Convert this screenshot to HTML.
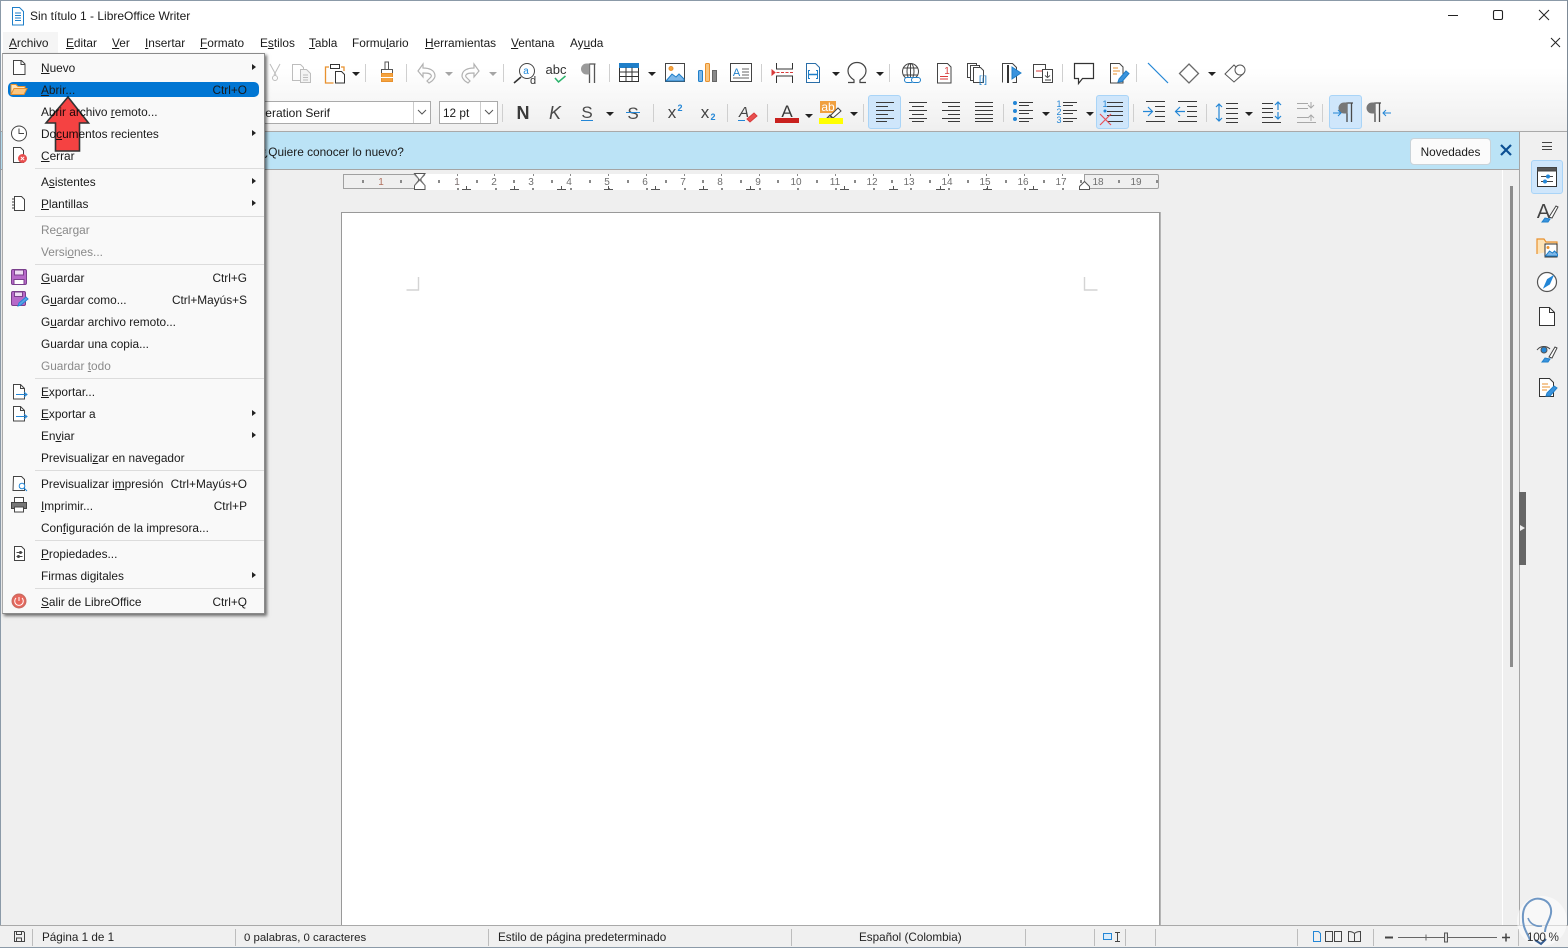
<!DOCTYPE html>
<html lang="es"><head><meta charset="utf-8"><title>Sin título 1 - LibreOffice Writer</title>
<style>
html,body{margin:0;padding:0;width:1568px;height:948px;overflow:hidden;background:#efefef}
body{font-family:"Liberation Sans","DejaVu Sans",sans-serif;font-size:12px;color:#1a1a1a;position:relative}
.a{position:absolute;white-space:nowrap}
.t{position:absolute;white-space:nowrap;line-height:16px;height:16px}
.mb{top:35px;font-size:11.85px}
svg{position:absolute;left:0;top:0;overflow:visible}
#menu{position:absolute;left:2px;top:53px;width:263px;height:561px;background:#f9f9f9;border:1px solid #8a8a8a;border-left-color:#aaa;box-shadow:2px 2px 3px rgba(0,0,0,.55);box-sizing:border-box}
.m{position:absolute;left:38px;white-space:nowrap;line-height:16px;color:#1a1a1a;font-size:11.85px}
.s{position:absolute;right:17px;white-space:nowrap;line-height:16px;color:#1a1a1a;font-size:11.85px;text-align:right}
.d{color:#8a8a8a}
.sep{position:absolute;left:32px;width:229px;height:1px;background:#dcdcdc}
.ar{position:absolute;left:249px;width:0;height:0;border-left:4px solid #222;border-top:3.5px solid transparent;border-bottom:3.5px solid transparent}
.st{position:absolute;top:925px;height:23px;line-height:25px;white-space:nowrap;font-size:11.7px;color:#222}
.sv{position:absolute;top:929px;width:1px;height:17px;background:#bdbdbd}
</style></head><body>

<!-- chrome backgrounds -->
<div class="a" style="left:0;top:0;width:1568px;height:131px;background:linear-gradient(#fff 0,#fff 68px,#f0f0f0 128px,#eee 131px)"></div>
<div class="a" style="left:0;top:131px;width:1568px;height:1px;background:#a9a9a9"></div>
<div class="a" style="left:0;top:132px;width:1519px;height:37px;background:#bbe3f6"></div>
<div class="a" style="left:0;top:169px;width:1519px;height:1px;background:#a5a5a5"></div>
<div class="a" style="left:1519px;top:132px;width:49px;height:793px;background:#f0f0f0;border-left:1px solid #a5a5a5;box-sizing:border-box"></div>
<div class="a" style="left:1502px;top:170px;width:1px;height:755px;background:#fff"></div>
<div class="a" style="left:1510px;top:186px;width:3px;height:481px;background:#8c8c8c"></div>
<div class="a" style="left:1519px;top:492px;width:7px;height:73px;background:#666"></div>
<div class="a" style="left:1520px;top:525px;width:0;height:0;border-left:5px solid #eee;border-top:3.5px solid transparent;border-bottom:3.5px solid transparent"></div>

<!-- window edge -->
<div class="a" style="left:0;top:0;width:1px;height:948px;background:#8b9aa8"></div>
<div class="a" style="left:0;top:0;width:1568px;height:1px;background:#8b9aa8"></div>
<div class="a" style="left:1567px;top:0;width:1px;height:948px;background:#7d8a96"></div>

<!-- page -->
<div class="a" style="left:341px;top:212px;width:819px;height:713px;background:#fff;border:1px solid #999;border-bottom:none;box-sizing:border-box;box-shadow:1px 0 0 #b5b5b5"></div>
<svg width="1568" height="948" style="position:absolute">
<g fill="none" stroke="#d4d4d4" stroke-width="1.4"><path d="M418.5 277v13h-12"/><path d="M1084.5 277v13h13"/></g>
</svg>

<!-- ruler -->
<div class="a" style="left:418px;top:174px;width:666px;height:16px;background:#fff"></div>
<div class="a" style="left:343px;top:174px;width:75px;height:15px;border:1px solid #a0a0a0;border-right:none;background:#efefef;box-sizing:border-box"></div>
<div class="a" style="left:1084px;top:174px;width:75px;height:15px;border:1px solid #a0a0a0;border-radius:0 2px 2px 0;background:#efefef;box-sizing:border-box"></div>
<svg width="1568" height="948" font-family="Liberation Sans" font-size="10" fill="#6f6f6f" text-anchor="middle">
<g id="nums">
<text x="381" y="185" fill="#b0705e">1</text><text x="457" y="185" fill="#7a6f6f">1</text><text x="494" y="185">2</text><text x="531" y="185">3</text><text x="569" y="185">4</text><text x="607" y="185">5</text><text x="645" y="185">6</text><text x="683" y="185">7</text><text x="720" y="185">8</text><text x="758" y="185">9</text><text x="796" y="185">10</text><text x="835" y="185">11</text><text x="872" y="185">12</text><text x="909" y="185">13</text><text x="947" y="185">14</text><text x="985" y="185">15</text><text x="1023" y="185">16</text><text x="1061" y="185">17</text><text x="1098" y="185">18</text><text x="1136" y="185">19</text>
</g>
<g fill="#8a8a8a">
<rect x="362" y="180" width="2" height="3"/><rect x="400" y="180" width="2" height="3"/><rect x="438" y="180" width="2" height="3"/><rect x="476" y="180" width="2" height="3"/><rect x="513" y="180" width="2" height="3"/><rect x="551" y="180" width="2" height="3"/><rect x="589" y="180" width="2" height="3"/><rect x="627" y="180" width="2" height="3"/><rect x="665" y="180" width="2" height="3"/><rect x="702" y="180" width="2" height="3"/><rect x="740" y="180" width="2" height="3"/><rect x="777" y="180" width="2" height="3"/><rect x="816" y="180" width="2" height="3"/><rect x="854" y="180" width="2" height="3"/><rect x="891" y="180" width="2" height="3"/><rect x="929" y="180" width="2" height="3"/><rect x="967" y="180" width="2" height="3"/><rect x="1005" y="180" width="2" height="3"/><rect x="1043" y="180" width="2" height="3"/><rect x="1080" y="180" width="2" height="3"/><rect x="1118" y="180" width="2" height="3"/><rect x="1156" y="180" width="2" height="3"/>
<rect x="457" y="174" width="1" height="2"/><rect x="494" y="174" width="1" height="2"/><rect x="533" y="174" width="1" height="2"/><rect x="570" y="174" width="1" height="2"/><rect x="608" y="174" width="1" height="2"/><rect x="646" y="174" width="1" height="2"/><rect x="684" y="174" width="1" height="2"/><rect x="721" y="174" width="1" height="2"/><rect x="759" y="174" width="1" height="2"/><rect x="797" y="174" width="1" height="2"/><rect x="835" y="174" width="1" height="2"/><rect x="873" y="174" width="1" height="2"/><rect x="910" y="174" width="1" height="2"/><rect x="948" y="174" width="1" height="2"/><rect x="986" y="174" width="1" height="2"/><rect x="1024" y="174" width="1" height="2"/><rect x="1062" y="174" width="1" height="2"/>
<rect x="457" y="188" width="2" height="2"/><rect x="495" y="188" width="2" height="2"/><rect x="532" y="188" width="2" height="2"/><rect x="570" y="188" width="2" height="2"/><rect x="608" y="188" width="2" height="2"/><rect x="646" y="188" width="2" height="2"/><rect x="684" y="188" width="2" height="2"/><rect x="721" y="188" width="2" height="2"/><rect x="759" y="188" width="2" height="2"/><rect x="797" y="188" width="2" height="2"/><rect x="835" y="188" width="2" height="2"/><rect x="873" y="188" width="2" height="2"/><rect x="910" y="188" width="2" height="2"/><rect x="948" y="188" width="2" height="2"/><rect x="986" y="188" width="2" height="2"/><rect x="1024" y="188" width="2" height="2"/><rect x="1062" y="188" width="2" height="2"/>
</g>
<g fill="none" stroke="#555" stroke-width="1">
<path d="M466.500 186v4M462 189.500h9M514.500 186v4M510 189.500h9M561.500 186v4M557 189.500h9M608.500 186v4M604 189.500h9M655.500 186v4M651 189.500h9M703.500 186v4M699 189.500h9M750.500 186v4M746 189.500h9M844.500 186v4M840 189.500h9M893.500 186v4M889 189.500h9M940.500 186v4M936 189.500h9M987.500 186v4M983 189.500h9M1033.500 186v4M1029 189.500h9"/>
<path d="M414.500 173.500h10.500l-4 5v2l4 5v4h-10.500v-4l4-5v-2l-4-5z" fill="#fff"/>
<path d="M414.500 174.500l10.500 11M425 174.500l-10.500 11" stroke="#777"/>
<path d="M1079.500 189.500v-3l5-5 5 5v3z" fill="#fff"/>
</g>
</svg>

<!-- title and menu bar -->
<div class="t" style="left:30px;top:8px">Sin título 1 - LibreOffice Writer</div>
<div class="a" style="left:3px;top:32px;width:55px;height:21px;background:#f5f5f5"></div>
<div class="t mb" style="left:9px"><u>A</u>rchivo</div>
<div class="t mb" style="left:66px"><u>E</u>ditar</div>
<div class="t mb" style="left:112px"><u>V</u>er</div>
<div class="t mb" style="left:145px"><u>I</u>nsertar</div>
<div class="t mb" style="left:200px"><u>F</u>ormato</div>
<div class="t mb" style="left:260px">E<u>s</u>tilos</div>
<div class="t mb" style="left:309px"><u>T</u>abla</div>
<div class="t mb" style="left:352px">Formu<u>l</u>ario</div>
<div class="t mb" style="left:425px"><u>H</u>erramientas</div>
<div class="t mb" style="left:511px"><u>V</u>entana</div>
<div class="t mb" style="left:570px">Ay<u>u</u>da</div>

<!-- combos -->
<div class="a" style="left:240px;top:101px;width:191px;height:23px;background:#fff;border:1px solid #aaa;box-sizing:border-box"></div>
<div class="a" style="left:413px;top:102px;width:1px;height:21px;background:#ccc"></div>
<div class="a" style="left:439px;top:101px;width:59px;height:23px;background:#fff;border:1px solid #aaa;box-sizing:border-box"></div>
<div class="a" style="left:480px;top:102px;width:1px;height:21px;background:#ccc"></div>
<div class="t" style="left:230px;top:105px;width:100px;text-align:right;font-size:12px">Liberation Serif</div>
<div class="t" style="left:443px;top:105px;font-size:11.8px">12 pt</div>

<!-- highlighted toolbar buttons -->
<div class="a" style="left:868px;top:95px;width:33px;height:34px;background:#cfe6fb;border:1px solid #a9d4f7;border-radius:3px;box-sizing:border-box"></div>
<div class="a" style="left:1096px;top:95px;width:33px;height:34px;background:#cfe6fb;border:1px solid #a9d4f7;border-radius:3px;box-sizing:border-box"></div>
<div class="a" style="left:1329px;top:95px;width:33px;height:34px;background:#cfe6fb;border:1px solid #a9d4f7;border-radius:3px;box-sizing:border-box"></div>
<div class="a" style="left:1531px;top:160px;width:32px;height:34px;background:#cfe6fb;border:1px solid #a9d4f7;border-radius:3px;box-sizing:border-box"></div>

<!-- info bar -->
<div class="t" style="left:261px;top:144px;font-size:11.85px">¿Quiere conocer lo nuevo?</div>
<div class="a" style="left:1410px;top:138px;width:81px;height:27px;background:#fbfbfb;border:1px solid #c9d3d9;border-radius:4px;box-sizing:border-box;text-align:center;line-height:27px;font-size:11.8px">Novedades</div>

<!-- icons -->
<svg width="1568" height="948" fill="none" stroke="#333" stroke-width="1">
<!-- title icon -->
<path d="M12.500 8.500h7l4 4v13.500h-11z" stroke="#1f7fc9" fill="#fff" transform="translate(0,-1)"/>
<path d="M15 13h6M15 15.500h6M15 18h6M15 20.500h6" stroke="#1f7fc9"/>
<!-- window controls -->
<path d="M1448 15.500h10M1539 10l10 10M1549 10l-10 10M1551 38l9 9M1560 38l-9 9" stroke="#222"/>
<rect x="1493.500" y="10.500" width="9" height="9" rx="1.500" stroke="#222" stroke-width="1.100"/>
<!-- infobar close -->
<path d="M1501 145l10 10M1511 145l-10 10" stroke="#0b4f93" stroke-width="2.200"/>
<!-- combo chevrons -->
<path d="M418 110l4 4 4-4M485 110l4 4 4-4" stroke="#555"/>

<!-- separators -->
<g stroke="#cfcfcf"><path d="M365.500 64v18M406.500 64v18M503.500 64v18M609.500 64v18M761.500 64v18M889.500 64v18M1062.500 64v18M1136.500 64v18M502.500 104v18M653.500 104v18M727.500 104v18M767.500 104v18M863.500 104v18M1003.500 104v18M1133.500 104v18M1206.500 104v18M1322.500 104v18"/></g>

<!-- dropdown arrows -->
<g fill="#222" stroke="none">
<path d="M352 72h8l-4 4zM648 72h8l-4 4zM832 72h8l-4 4zM876 72h8l-4 4zM1208 72h8l-4 4zM606 112h8l-4 4zM805 114h8l-4 4zM850 112h8l-4 4zM1042 112h8l-4 4zM1086 112h8l-4 4zM1245 112h8l-4 4z"/>
<path d="M445 72h8l-4 4zM489 72h8l-4 4z" fill="#a5a5a5"/>
</g>

<!-- row 1 -->
<g stroke="#bdbdbd"><path d="M270 64l6 11M280 64l-6 11"/><circle cx="275" cy="78" r="2.500"/></g>
<g stroke="#bdbdbd"><path d="M292.500 64.500h8l3 3v13h-11z"/><path d="M300.500 69.500h6l4 4v9h-10z" fill="#f4f4f4"/><path d="M303 75h5M303 77.500h5M303 80h5"/></g>
<g><path d="M329 67h-3.500v16h8" stroke="#e8912e" stroke-width="1.300"/><path d="M341 67h3v4" stroke="#e8912e" stroke-width="1.300"/><rect x="330.500" y="64.500" width="9" height="4" fill="#fff"/><path d="M335.500 71.500h6l3 3v8.500h-9z" fill="#fff"/></g>
<g><path d="M385 62h3.500v8h-3.500z" stroke="#555"/><rect x="381.500" y="69.500" width="11" height="4" fill="#fff" stroke="#555"/><path d="M381.500 73.500h11v8h-11z" fill="#f5a33f" stroke="#e8912e"/><path d="M381 77.500h12" stroke="#fff"/></g>
<g stroke="#b2b2b2" stroke-width="1.200"><path d="M418 72l5-7v4c6 0 12 2 12 8 0 2-2 4-3 5l-3 2-2-2 3-3c1-1 2-2 1-3-1-2-5-2-8-2v4z" transform="translate(0,-1)"/><path d="M479 72l-5-7v4c-6 0-12 2-12 8 0 2 2 4 3 5l3 2 2-2-3-3c-1-1-2-2-1-3 1-2 5-2 8-2v4z" transform="translate(0,-1)"/></g>
<g><circle cx="527" cy="71" r="7.500" fill="#fff" stroke="#444"/><path d="M521 77l-7 6" stroke="#333" stroke-width="1.600"/></g>
<text x="526" y="74" font-family="Liberation Sans" font-size="10" fill="#1e88d9" stroke="none" text-anchor="middle">a</text>
<text x="533" y="84" font-family="Liberation Sans" font-size="11" fill="#333" stroke="none" text-anchor="middle">d</text>
<text x="556" y="74" font-family="Liberation Sans" font-size="13" fill="#333" stroke="none" text-anchor="middle">abc</text>
<path d="M555 78l3.500 4 7-6" stroke="#2bb36b" stroke-width="1.500"/>
<path d="M589 64h6.500M589.500 64v19M594.500 64v19" stroke="#555" stroke-width="1.300"/><path d="M589 64h-2.500a4.500 4.500 0 0 0 0 10h2.500z" fill="#9a9a9a" stroke="#9a9a9a"/>
<g><rect x="619.500" y="63.500" width="19" height="18" fill="#fff"/><rect x="619.500" y="63.500" width="19" height="4" fill="#1f7fc9" stroke="#1f7fc9"/><path d="M619.500 72h19M619.500 76.500h19M626 67.500v14M632 67.500v14"/></g>
<g><rect x="665.500" y="63.500" width="19" height="18" fill="#fff" stroke="#444"/><circle cx="671" cy="68.500" r="2" fill="#f5a33f" stroke="#e8912e"/><path d="M666 81l6-7 4 3 3-3 5 5v2z" fill="#7db7e8" stroke="#1f7fc9"/></g>
<g><rect x="698.500" y="70.500" width="4" height="11" rx="1" fill="#7db7e8" stroke="#1f7fc9"/><rect x="705.500" y="63.500" width="4" height="18" rx="1" fill="#fbc67f" stroke="#e8912e"/><rect x="712.500" y="70.500" width="4" height="11" fill="#888" stroke="#666"/></g>
<g><rect x="730.500" y="63.500" width="21" height="18" fill="#fff" stroke="#444"/><path d="M742 69h7M742 72h7M742 75h7M733 78h16" stroke="#666"/></g>
<text x="736.500" y="76" font-family="Liberation Sans" font-size="11" fill="#1f7fc9" stroke="none" text-anchor="middle">A</text>
<g><path d="M776.500 63v6h16v-6M776.500 83v-7h16v7" stroke="#333"/><path d="M772 72.500h21" stroke="#d83b3b" stroke-dasharray="3 1.500"/><path d="M772 70l3 2.500-3 2.500z" fill="#d83b3b" stroke="#d83b3b"/></g>
<g><path d="M806.500 63.500h9l4 4v15h-13z" fill="#fff" stroke="#2a6ea8"/><path d="M810 70.500h-1.500v8h1.500M816 70.500h1.500v8h-1.500" stroke="#1f7fc9"/><path d="M809 74.500h8" stroke="#1f7fc9" stroke-width="1.500"/></g>
<path d="M848 82.500h6v-2.500c-3-2-6-5-6-9 0-5 4-8.500 9-8.500s9 3.500 9 8.500c0 4-3 7-6 9v2.500h6" stroke="#444" stroke-width="1.200"/>
<g stroke="#444"><circle cx="910.500" cy="71.500" r="8"/><ellipse cx="910.500" cy="71.500" rx="3.500" ry="8"/><path d="M903 68h15M903 75h15M910.500 63v17"/></g>
<g stroke="#1f7fc9" fill="#fff"><rect x="904.500" y="77.500" width="9" height="5" rx="2.500"/><rect x="911.500" y="77.500" width="9" height="5" rx="2.500"/></g>
<g><path d="M937.500 63.500h10l3.500 3.500v16h-13.500z" fill="#fff" stroke="#444"/><path d="M940 76.500h8M940 79h8" stroke="#d83b3b"/></g>
<text x="947" y="74" font-family="Liberation Sans" font-size="10" fill="#d83b3b" stroke="none" text-anchor="middle">1</text>
<g fill="#fff" stroke="#444"><rect x="967.500" y="63.500" width="9" height="14"/><rect x="970.500" y="65.500" width="9" height="15"/><path d="M973.500 67.500h7l3 3v12h-10z"/></g>
<text x="983" y="83" font-family="Liberation Sans" font-size="10.500" fill="#1f7fc9" stroke="none" text-anchor="middle">[i]</text>
<g><path d="M1002.500 82.500v-19h10l4 4v15h-4" stroke="#444"/><path d="M1008 65v18" stroke="#333" stroke-width="2"/><path d="M1012 67l9 6-9 6z" fill="#3a93dd" stroke="#1f7fc9"/></g>
<g><path d="M1033.500 64.500h12v13h-12z" fill="#fff" stroke="#444"/><path d="M1036 71h7" stroke="#d83b3b"/><path d="M1042.500 69.500h10v13h-10z" fill="#fff" stroke="#444"/><path d="M1047.500 71.500v5m-2.500-1l2.500 2 2.500-2M1045 80h6" stroke="#444"/></g>
<path d="M1074.500 63.500h19v15h-11l-4 5v-5h-4z" fill="#fff" stroke="#333" stroke-width="1.200"/>
<g><path d="M1110.500 63.500h9l3.500 3.500v16h-12.500z" fill="#fff" stroke="#444"/><path d="M1113 68h5M1113 71h7M1113 74h4" stroke="#e8912e"/><path d="M1118 82l1-3 7-8 3 2.500-7 8z" fill="#3a93dd" stroke="#1f7fc9"/></g>
<path d="M1148 63l20 20" stroke="#2386d6" stroke-width="1.200"/>
<path d="M1189 64l9.500 9.500-9.500 9.500-9.500-9.500z" stroke="#6a6a6a" stroke-width="1.300" fill="#fff"/>
<g><path d="M1234 66l9 9-9 8-9-8z" transform="translate(0,-1)" stroke="#555" fill="#fff"/><circle cx="1240" cy="70" r="5" fill="#fff" stroke="#555"/></g>

<!-- row 2 -->
<text x="523" y="119" font-family="Liberation Sans" font-size="18" font-weight="700" fill="#3a3a3a" stroke="none" text-anchor="middle">N</text>
<text x="555" y="119" font-family="Liberation Sans" font-size="18" font-style="italic" fill="#4a4a4a" stroke="none" text-anchor="middle">K</text>
<text x="587" y="118" font-family="Liberation Sans" font-size="17" fill="#4a4a4a" stroke="none" text-anchor="middle">S</text>
<path d="M581 120.500h12" stroke="#2386d6"/>
<text x="633" y="119" font-family="Liberation Sans" font-size="17" fill="#4a4a4a" stroke="none" text-anchor="middle">S</text>
<path d="M626 112.500h14" stroke="#2386d6"/>
<text x="672" y="118" font-family="Liberation Sans" font-size="17" fill="#444" stroke="none" text-anchor="middle">x</text>
<text x="680" y="111" font-family="Liberation Sans" font-size="9" font-weight="700" fill="#2386d6" stroke="none" text-anchor="middle">2</text>
<text x="705" y="118" font-family="Liberation Sans" font-size="17" fill="#444" stroke="none" text-anchor="middle">x</text>
<text x="713" y="120" font-family="Liberation Sans" font-size="9" font-weight="700" fill="#2386d6" stroke="none" text-anchor="middle">2</text>
<text x="744" y="117" font-family="Liberation Sans" font-size="15" font-style="italic" fill="#444" stroke="none" text-anchor="middle">A</text>
<path d="M738 120.500h7" stroke="#2386d6"/><path d="M747 119l7-6 3 3-7 6z" fill="#e84f4f" stroke="#d83b3b"/>
<text x="787" y="117" font-family="Liberation Sans" font-size="17" fill="#3a3a3a" stroke="none" text-anchor="middle">A</text>
<rect x="775" y="118" width="24" height="5" fill="#c9211e" stroke="none"/>
<rect x="820" y="101" width="16" height="12" fill="#f0a040" stroke="none"/>
<text x="828" y="111" font-family="Liberation Sans" font-size="12" fill="#fff" stroke="none" text-anchor="middle">ab</text>
<path d="M830 116l8-8 3 3-8 7zM827 118l3-3 3 3z" fill="#fff" stroke="#444"/>
<rect x="819" y="118" width="24" height="6" fill="#ff0" stroke="none"/>

<g stroke="#3a3a3a">
<path d="M876 102.500h18M876 106.500h12M876 110.500h18M876 114.500h12M876 118.500h18M876 121.500h11" stroke-width="0.900"/>
<path d="M909 102.500h18M912 106.500h12M909 110.500h18M912 114.500h12M909 118.500h18M912 121.500h12" stroke-width="0.900"/>
<path d="M942 102.500h18M948 106.500h12M942 110.500h18M948 114.500h12M942 118.500h18M948 121.500h12" stroke-width="0.900"/>
<path d="M975 102.500h18M975 106.500h18M975 110.500h18M975 114.500h18M975 118.500h18M975 121.500h18" stroke-width="0.900"/>
<path d="M1019 102.500h14M1019 105.500h10M1019 110.500h14M1019 113.500h10M1019 118.500h14M1019 121.500h10" stroke-width="1"/>
<path d="M1063 102.500h14M1063 105.500h10M1063 110.500h14M1063 113.500h10M1063 118.500h14M1063 121.500h10" stroke-width="1"/>
<path d="M1107 102.500h16M1107 106.500h16M1107 111.500h16M1107 115.500h16M1107 121.500h16" stroke-width="1"/>
<path d="M1146 101.500h19M1155 106.500h10M1155 111.500h10M1155 116.500h10M1146 121.500h19" stroke-width="1"/>
<path d="M1178 101.500h19M1187 106.500h10M1187 111.500h10M1187 116.500h10M1178 121.500h19" stroke-width="1"/>
<path d="M1226 103.500h12M1226 108.500h12M1226 113.500h12M1226 118.500h12M1226 122.500h12" stroke-width="1"/>
<path d="M1262 103.500h11M1262 108.500h11M1262 112.500h11M1262 117.500h11M1262 122.500h19" stroke-width="1"/>
</g>
<g fill="#2386d6" stroke="none"><circle cx="1015" cy="103" r="2"/><circle cx="1015" cy="111" r="2"/><circle cx="1015" cy="119" r="2"/><circle cx="1105" cy="111" r="1.500"/></g>
<g font-family="Liberation Sans" font-size="9" fill="#2386d6" stroke="none" text-anchor="middle"><text x="1059" y="107">1</text><text x="1059" y="115">2</text><text x="1059" y="123">3</text><text x="1105" y="107">1</text></g>
<path d="M1100 114l11 11M1111 114l-11 11" stroke="#e9505a" stroke-width="1.200"/>
<path d="M1143 111.500h9M1148 107l4.500 4.500-4.500 4.500" stroke="#2386d6" stroke-width="1.200"/>
<path d="M1185 111.500h-9M1180 107l-4.500 4.500 4.500 4.500" stroke="#2386d6" stroke-width="1.200"/>
<path d="M1219 104v17M1216 107l3-3 3 3M1216 118l3 3 3-3" stroke="#2386d6" stroke-width="1.200"/>
<path d="M1278 102v8M1275 105l3-3 3 3M1278 119v-7M1275 116l3 3 3-3" stroke="#2386d6" stroke-width="1.200"/>
<g stroke="#a8a8a8"><path d="M1297 103.500h11M1297 108.500h11M1297 117.500h11M1297 122.500h19M1311 102v6M1308 105l3 3 3-3M1311 121v-6M1308 118l3-3 3 3"/></g>
<path d="M1346 103h7M1347 103v19M1351.500 103v19" stroke="#4a4a4a" stroke-width="1.300"/><path d="M1347 103h-3a4.500 4.500 0 0 0 0 10h3z" fill="#777" stroke="#777"/><path d="M1333 113h8M1338 110l3 3-3 3" stroke="#2386d6"/>
<path d="M1374 103h7M1375 103v19M1379.500 103v19" stroke="#4a4a4a" stroke-width="1.300"/><path d="M1375 103h-3a4.500 4.500 0 0 0 0 10h3z" fill="#777" stroke="#777"/><path d="M1391 113h-8M1386 110l-3 3 3 3" stroke="#2386d6"/>

<!-- sidebar -->
<path d="M1542 142.500h10M1542 146.500h10M1542 149.500h10" stroke="#444"/>
<rect x="1537.500" y="167.500" width="19" height="19" fill="#fff" stroke="#333"/><rect x="1537.500" y="167.500" width="19" height="3.500" fill="#555" stroke="#444"/>
<path d="M1541 176.500h12M1541 181.500h12" stroke="#444"/><circle cx="1548" cy="176.500" r="1.500" fill="#2386d6" stroke="#2386d6"/><circle cx="1545" cy="181.500" r="1.500" fill="#2386d6" stroke="#2386d6"/>
<text x="1543.500" y="218" font-family="Liberation Sans" font-size="20" fill="#444" stroke="none" text-anchor="middle">A</text>
<path d="M1549 217l7-11 2 1-6 11z" fill="#fff" stroke="#444"/><path d="M1542 222l3-4 5 1-2 3z" fill="#3a93dd" stroke="#1f7fc9"/>
<path d="M1537 254v-15h7l2 3h11v8" fill="#fde3b8" stroke="#e8912e" stroke-width="1.200"/><rect x="1545" y="244" width="12" height="13" fill="#fff" stroke="#333"/><path d="M1545.500 256l4-5 3 2 2-2 3 3v2z" fill="#7db7e8" stroke="#1f7fc9"/><circle cx="1548" cy="247.500" r="1" fill="#e8912e" stroke="#e8912e"/>
<circle cx="1547" cy="282" r="9.500" fill="#fff" stroke="#555" stroke-width="1.200"/><path d="M1553 276l-3.500 8-5.500 3.500 3.500-8z" fill="#2386d6" stroke="#2386d6"/>
<path d="M1539.500 307.500h10l5 5v13h-15z" fill="#fff" stroke="#333"/><path d="M1549.500 307.500v5h5" stroke="#333"/>
<path d="M1537 350c3-4 9-5 13-1" stroke="#444"/><circle cx="1544" cy="350" r="3" fill="#2386d6" stroke="#555"/><path d="M1549 357l6-10 2 1-5 10z" fill="#fff" stroke="#444"/><path d="M1542 362l3-4 5 1-2 3z" fill="#3a93dd" stroke="#1f7fc9"/>
<path d="M1539.500 378.500h10l4 4v14h-14z" fill="#fff" stroke="#333"/><path d="M1542 384h6M1542 387h8M1542 390h5" stroke="#e8912e"/><path d="M1546 396l1-3 7-7 3 2-7 8z" fill="#3a93dd" stroke="#1f7fc9"/>
</svg>

<!-- status bar -->
<div class="a" style="left:0;top:925px;width:1568px;height:23px;background:#f0f0f0;border-top:1px solid #a9a9a9;box-sizing:border-box"></div>
<div class="a" style="left:0;top:947px;width:1568px;height:1px;background:#8b9aa8"></div>
<div class="sv" style="left:32px"></div><div class="sv" style="left:235px"></div><div class="sv" style="left:488px"></div><div class="sv" style="left:791px"></div><div class="sv" style="left:1025px"></div><div class="sv" style="left:1094px"></div><div class="sv" style="left:1125px"></div><div class="sv" style="left:1155px"></div><div class="sv" style="left:1297px"></div><div class="sv" style="left:1373px"></div><div class="sv" style="left:1518px"></div>
<div class="st" style="left:42px">Página 1 de 1</div>
<div class="st" style="left:244px;font-size:11.4px;line-height:27px">0 palabras, 0 caracteres</div>
<div class="st" style="left:498px">Estilo de página predeterminado</div>
<div class="st" style="left:859px">Español (Colombia)</div>
<svg width="1568" height="948" fill="none" stroke="#444">
<path d="M14.500 931.500h9l1 1v9h-10z"/><path d="M16.500 931.500v3h5v-3M16.500 941v-3h5v3" />
<rect x="1103.500" y="933.500" width="8" height="6" stroke="#2386d6" fill="#d9ecfb"/><path d="M1115 932.500h5M1117.500 932.500v9M1115 941.500h5"/>
<path d="M1313.500 931.500h5l2 2v8h-7z" stroke="#2386d6"/>
<path d="M1325.500 931.500h7v10h-7zM1334.500 931.500h7v10h-7z"/>
<path d="M1348.500 931.500c3 0 5 1 6 2 1-1 3-2 6-2v10h-12zM1354.500 933v8.500"/>
<path d="M1385 937.500h8" stroke-width="2"/><path d="M1398 937.500h99" stroke="#666"/><path d="M1426 934.500v6" stroke="#666"/><rect x="1444.500" y="933" width="3" height="9" fill="#ddd" stroke="#555"/><path d="M1502 937.500h8M1506 933.500v8" stroke-width="1.500"/>
</svg>

<!-- watermark -->
<svg width="1568" height="948" fill="none">
<circle cx="1542" cy="921" r="25" fill="#fff" fill-opacity=".55"/>
<path d="M1530 940c-3-8-8-12-7-26 1-11 10-17 18-15 9 2 12 10 9 18-2 6-5 9-5 15" stroke="#6f97c4" stroke-width="2"/>
<path d="M1528 918c2 6 8 9 14 8" stroke="#6f97c4" stroke-width="1.600"/>
<path d="M1535 940l6 4 5-5" stroke="#355d92" stroke-width="2"/>
</svg>
<div class="st" style="left:1527px;color:#333;letter-spacing:-.3px">100 %</div>

<!-- file menu -->
<div id="menu">
<div style="position:absolute;left:5px;top:28px;width:251px;height:15px;background:#0176d3;border-radius:5px"></div>
<div class="m" style="top:6px"><u>N</u>uevo</div><div class="ar" style="top:10px"></div>
<div class="m" style="top:28px"><u>A</u>brir...</div><div class="s" style="top:28px">Ctrl+O</div>
<div class="m" style="top:50px">Abrir archivo <u>r</u>emoto...</div>
<div class="m" style="top:72px">Do<u>c</u>umentos recientes</div><div class="ar" style="top:76px"></div>
<div class="m" style="top:94px"><u>C</u>errar</div>
<div class="sep" style="top:114px"></div>
<div class="m" style="top:120px">A<u>s</u>istentes</div><div class="ar" style="top:124px"></div>
<div class="m" style="top:142px"><u>P</u>lantillas</div><div class="ar" style="top:146px"></div>
<div class="sep" style="top:162px"></div>
<div class="m d" style="top:168px">Re<u>c</u>argar</div>
<div class="m d" style="top:190px">Versi<u>o</u>nes...</div>
<div class="sep" style="top:210px"></div>
<div class="m" style="top:216px"><u>G</u>uardar</div><div class="s" style="top:216px">Ctrl+G</div>
<div class="m" style="top:238px">G<u>u</u>ardar como...</div><div class="s" style="top:238px">Ctrl+Mayús+S</div>
<div class="m" style="top:260px">G<u>u</u>ardar archivo remoto...</div>
<div class="m" style="top:282px">Guardar una copia...</div>
<div class="m d" style="top:304px">Guardar <u>t</u>odo</div>
<div class="sep" style="top:324px"></div>
<div class="m" style="top:330px"><u>E</u>xportar...</div>
<div class="m" style="top:352px"><u>E</u>xportar a</div><div class="ar" style="top:356px"></div>
<div class="m" style="top:374px">En<u>v</u>iar</div><div class="ar" style="top:378px"></div>
<div class="m" style="top:396px">Previsuali<u>z</u>ar en navegador</div>
<div class="sep" style="top:416px"></div>
<div class="m" style="top:422px">Previsualizar i<u>m</u>presión</div><div class="s" style="top:422px">Ctrl+Mayús+O</div>
<div class="m" style="top:444px"><u>I</u>mprimir...</div><div class="s" style="top:444px">Ctrl+P</div>
<div class="m" style="top:466px">Con<u>f</u>iguración de la impresora...</div>
<div class="sep" style="top:486px"></div>
<div class="m" style="top:492px"><u>P</u>ropiedades...</div>
<div class="m" style="top:514px">Firmas digitales</div><div class="ar" style="top:518px"></div>
<div class="sep" style="top:534px"></div>
<div class="m" style="top:540px"><u>S</u>alir de LibreOffice</div><div class="s" style="top:540px">Ctrl+Q</div>
</div>

<!-- menu icons and red arrow -->
<svg width="1568" height="948" fill="none" stroke="#444">
<path d="M13.500 60.500h8l3.500 3.500v10.500h-11.500z" fill="#fff"/><path d="M21 60.500v4h4"/>
<path d="M11 94v-9.500h5l2 2h7v2" fill="#fde3b8" stroke="#e8912e"/><path d="M11 94.500l3-6h13l-3 6z" fill="#fbc67f" stroke="#e8912e"/>
<circle cx="19" cy="133.500" r="7.500" fill="#fff"/><path d="M19 128.500v5h5"/>
<path d="M13.500 147.500h7l3 3v12h-10z" fill="#fff"/><circle cx="22.500" cy="158.500" r="4" fill="#e84f4f" stroke="#e84f4f"/><path d="M20.800 156.800l3.400 3.400M24.200 156.800l-3.400 3.400" stroke="#fff"/>
<path d="M14.500 196.500h7l3 3v11h-10zM12 199h2M12 202h2M12 205h2M12 208h2" fill="#fff"/>
<g fill="#b769c9" stroke="#7a3f8c"><rect x="11.500" y="269.500" width="15" height="15" rx="1.500"/></g><rect x="14.500" y="270" width="9" height="5" fill="#eedcf3" stroke="#7a3f8c"/><rect x="14" y="279.500" width="10" height="5" fill="#fff" stroke="#7a3f8c"/>
<g fill="#b769c9" stroke="#7a3f8c"><rect x="11.500" y="291.500" width="14" height="14" rx="1.500"/></g><rect x="14.500" y="292" width="8" height="4.500" fill="#eedcf3" stroke="#7a3f8c"/><path d="M18 306l1-3 7-6 2 2-7 6z" fill="#5aa4e4" stroke="#2386d6"/>
<path d="M13.500 384.500h7l4 4v10.500h-11zM20.500 384.500v4h4" fill="#fff"/><path d="M16 394.500h11M24 392l3 2.500-3 2.500" stroke="#2386d6"/>
<path d="M13.500 406.500h7l4 4v10.500h-11zM20.500 406.500v4h4" fill="#fff"/><path d="M16 416.500h11M24 414l3 2.500-3 2.500" stroke="#2386d6"/>
<path d="M13.500 476.500h8l3 3v11h-11.500z" fill="#fff"/><circle cx="22" cy="486" r="2.800" stroke="#2386d6" fill="#fff"/><path d="M24 488l3 3" stroke="#2386d6"/>
<rect x="14.500" y="497.500" width="9" height="5" fill="#fff"/><rect x="11.500" y="502.500" width="15" height="6" fill="#777"/><rect x="14.500" y="507" width="9" height="5" fill="#fff"/>
<path d="M14.500 546.500h7l3 3v11h-10z" fill="#fff"/><path d="M16.500 552.500h6M16.500 556.500h6"/><circle cx="20.500" cy="552.500" r="1" fill="#444"/><circle cx="18.500" cy="556.500" r="1" fill="#444"/>
<circle cx="19" cy="601" r="6.800" fill="#e8675d" stroke="#cc6a60" stroke-width="1.400"/><path d="M19 597v4" stroke="#fff"/><path d="M16 598a4.300 4.300 0 1 0 6 0" stroke="#fff"/>
</svg>
<svg width="1568" height="948" style="mix-blend-mode:multiply">
<path d="M68 97L46 123h9.500v28h24v-28h9z" fill="#fb4343" stroke="#333" stroke-width="1.600"/>
</svg>
</body></html>
